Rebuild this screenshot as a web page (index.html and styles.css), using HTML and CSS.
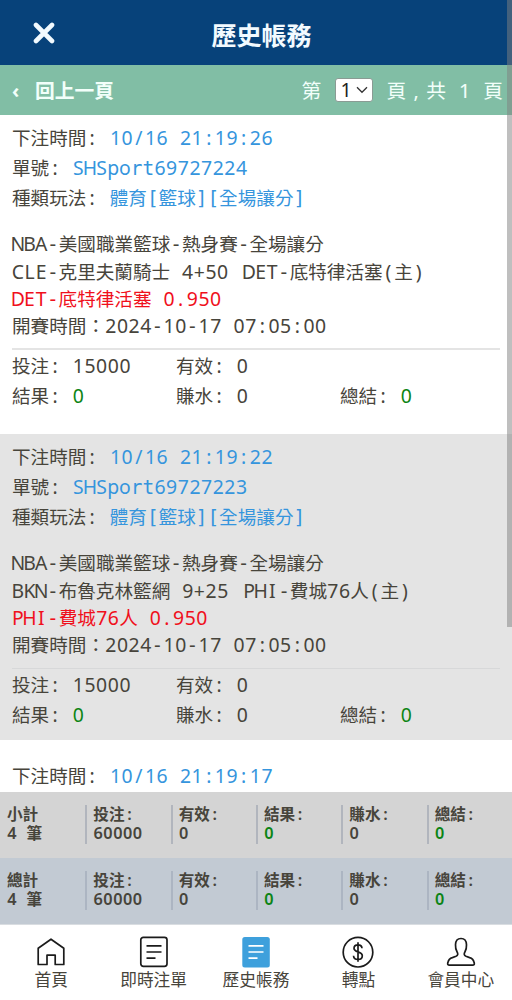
FILE: index.html
```html
<!DOCTYPE html>
<html lang="zh-Hant">
<head>
<meta charset="utf-8">
<title>歷史帳務</title>
<link rel="stylesheet" href="styles.css">
</head>
<body>
<div class="app">
  <header class="top">
    <svg class="close" width="22" height="22" viewBox="0 0 22 22"><path d="M3 3L19 19M19 3L3 19"/></svg>
    <h1>歷史帳務</h1>
  </header>
  <div class="bar">
    <span class="chev">‹</span><span class="back">回上一頁</span>
    <div class="pager"><span>第</span><span class="select">1<svg width="12" height="8" viewBox="0 0 12 8"><path d="M1 1.3L6 6.3L11 1.3"/></svg></span><span>頁</span><span class="comma">,</span><span data-mono>共 1 頁</span></div>
  </div>
  <main class="list">
    <article class="bet">
      <p data-mono>下注時間: <b>10/16 21:19:26</b></p>
      <p data-mono>單號: <b>SHSport69727224</b></p>
      <p data-mono>種類玩法: <b>體育[籃球][全場讓分]</b></p>
      <div class="detail">
        <p data-mono>NBA-美國職業籃球-熱身賽-全場讓分</p>
        <p data-mono>CLE-克里夫蘭騎士 4+50 <span class="side">DET-底特律活塞(主)</span></p>
        <p data-mono class="red">DET-底特律活塞 0.950</p>
        <p data-mono>開賽時間：2024-10-17 07:05:00</p>
      </div>
      <div class="sums">
        <p data-mono>投注: 15000</p><p data-mono>有效: 0</p><p></p>
        <p data-mono>結果: <em>0</em></p><p data-mono>賺水: 0</p><p data-mono>總結: <em>0</em></p>
      </div>
    </article>
    <article class="bet alt">
      <p data-mono>下注時間: <b>10/16 21:19:22</b></p>
      <p data-mono>單號: <b>SHSport69727223</b></p>
      <p data-mono>種類玩法: <b>體育[籃球][全場讓分]</b></p>
      <div class="detail">
        <p data-mono>NBA-美國職業籃球-熱身賽-全場讓分</p>
        <p data-mono>BKN-布魯克林籃網 9+25 <span class="side">PHI-費城76人(主)</span></p>
        <p data-mono class="red">PHI-費城76人 0.950</p>
        <p data-mono>開賽時間：2024-10-17 07:05:00</p>
      </div>
      <div class="sums">
        <p data-mono>投注: 15000</p><p data-mono>有效: 0</p><p></p>
        <p data-mono>結果: <em>0</em></p><p data-mono>賺水: 0</p><p data-mono>總結: <em>0</em></p>
      </div>
    </article>
    <article class="bet">
      <p data-mono>下注時間: <b>10/16 21:19:17</b></p>
    </article>
  </main>
  <section class="total">
    <div data-mono>小計<br>4 筆</div><div data-mono>投注:<br>60000</div><div data-mono>有效:<br>0</div><div data-mono>結果:<br><em>0</em></div><div data-mono>賺水:<br>0</div><div data-mono>總結:<br><em>0</em></div>
  </section>
  <section class="total grand">
    <div data-mono>總計<br>4 筆</div><div data-mono>投注:<br>60000</div><div data-mono>有效:<br>0</div><div data-mono>結果:<br><em>0</em></div><div data-mono>賺水:<br>0</div><div data-mono>總結:<br><em>0</em></div>
  </section>
  <nav class="tabs">
    <a><svg width="32" height="32" viewBox="0 0 32 32"><path d="M3.2 28.5V12.2L16 3.2L28.8 12.2V28.5H20.2V19.2H12V28.5Z"/></svg>首頁</a>
    <a><svg width="32" height="32" viewBox="0 0 32 32"><rect x="2.8" y="1.3" width="26.2" height="29" rx="2.5"/><path d="M8.5 9.8H23.5M8.5 16H23.5M8.5 22.2H17.5"/></svg>即時注單</a>
    <a><svg class="on" width="32" height="32" viewBox="0 0 32 32"><rect x="2.3" y="1" width="27.5" height="30.5" rx="2.5"/><path d="M8.5 9.8H23.5M8.5 16H23.5M8.5 22.2H17.5"/></svg>歷史帳務</a>
    <a><svg width="32" height="32" viewBox="0 0 32 32"><circle cx="16" cy="16.2" r="14.8"/><path d="M20 12.2C19.8 9.8 18 8.8 16 8.8C13.6 8.8 12 10 12 12.2C12 17 20.3 14.8 20.3 19.8C20.3 22 18.5 23.5 16 23.5C13.5 23.5 11.7 22.3 11.5 19.7M16 6.3V25.7"/></svg>轉點</a>
    <a><svg width="32" height="32" viewBox="0 0 32 32"><path d="M4.5 29.2C2.8 29.2 2.4 28.3 2.8 26.8C3.4 23.8 4.8 22.3 7.4 21.6L11 20.3C13.2 19.4 13.1 17.6 12 15.8C10.8 13.8 10.4 11.6 10.5 8.8C10.6 4.8 12.7 2.5 16 2.5S21.4 4.8 21.5 8.8C21.6 11.6 21.2 13.8 20 15.8C18.9 17.6 18.8 19.4 21 20.3L24.6 21.6C27.2 22.3 28.6 23.8 29.2 26.8C29.6 28.3 29.2 29.2 27.5 29.2Z"/></svg>會員中心</a>
  </nav>
  <div class="scrollbar"></div>
</div>
<script src="mono.js"></script>
</body>
</html>
```

FILE: styles.css
```css
* { box-sizing: border-box; margin: 0; padding: 0; }
body { font-family: "Noto Sans", "Noto Sans CJK TC", sans-serif; color: #47443b; background: #fff; }
.app { position: relative; width: 512px; height: 1000px; display: flex; flex-direction: column; overflow: hidden; }
svg { fill: none; flex: none; }

.top { height: 65px; flex: none; background: #07427a; color: #f2faff; display: grid; grid-template-columns: 88px 1fr 78px; align-items: center; }
.close { justify-self: center; stroke: #f2faff; stroke-width: 4.6; stroke-linecap: round; }
.top h1 { font-size: 25px; line-height: 40px; text-align: center; padding: 4px 0 0 1px; font-weight: 700; }

.bar { height: 50px; flex: none; background: #81bea5; color: #f2fffa; display: flex; align-items: center; padding: 2px 9px 0 12px; font-size: 19.8px; line-height: 30px; }
.chev { width: 23px; font-weight: 700; }
.back { font-weight: 700; }
.pager { margin-left: auto; display: flex; align-items: center; }
.select { width: 38px; height: 24px; margin: -2px 13px 0 14px; background: #fff; color: #222; border: 1px solid #8a9b94; border-radius: 3px; display: flex; align-items: center; justify-content: space-between; padding: 0 4px 0 4px; line-height: 22px; font-size: 19.5px; }
.select svg { stroke: #333; stroke-width: 1.3; }
.comma { width: 20px; text-align: center; }

.list { flex: 1; min-height: 0; overflow: hidden; }
.bet { height: 306px; margin-bottom: 13px; padding: 8px 12px 0; font-size: 18.6px; line-height: 30.1px; white-space: nowrap; }
.bet p { height: 30.1px; }
.bet b { font-weight: 400; color: #3595dd; }
.alt { background: #e4e4e4; }
.detail { line-height: 27.3px; padding: 17px 0 9px; border-bottom: 2px solid #e4e4e4; }
.detail p { height: 27.3px; }
.alt .detail { border-color: #d7d8d9; border-bottom-width: 1px; padding-bottom: 10px; }
.side { margin-left: 3px; }
.bet .red { color: #f0101c; }
em { font-style: normal; color: #0c8415; }
.sums { display: grid; grid-template-columns: 164px 164px 1fr; grid-auto-rows: 30px; padding-top: 1px; }

.ch { font-size: 1.043em; line-height: 1; }
.wide { font-family: "DejaVu Sans Mono", monospace; }

.total { height: 66px; flex: none; background: #d4d4d4; display: grid; grid-template-columns: repeat(6, 1fr); padding-top: 13px; font-size: 15.6px; line-height: 19.4px; font-weight: 600; white-space: nowrap; }
.total div { height: 39px; padding-left: 6px; border-left: 2px solid #b1b5bd; }
.total div:first-child { border-left: 0; padding-left: 7px; }
.grand { background: #c2cad3; }
.grand div { border-color: #acb5c2; }

.tabs { height: 76px; flex: none; display: grid; grid-template-columns: repeat(5, 1fr); padding-top: 11px; border-top: 1px solid #d9dde1; }
.tabs a { display: flex; flex-direction: column; align-items: center; font-size: 16.7px; line-height: 24px; }
.tabs svg { stroke: #1b1b1b; stroke-width: 1.7; stroke-linejoin: round; }
.tabs .on rect { fill: #3ea0dc; stroke: none; }
.tabs .on path { stroke: #fff; }

.scrollbar { position: absolute; top: 0; right: 0; width: 5px; height: 627px; background: rgba(127, 127, 127, .5); }
```

FILE: mono.js
```js
// Sets every ASCII character on an even grid, one cell per character.
const CELL = 0.601;
const WIDE = /[-rt[\]]/;
const ctx = document.createElement('canvas').getContext('2d');

function cellSpan(ch, weight) {
  const wide = WIDE.test(ch);
  ctx.font = weight + ' 100px ' + (wide ? '"DejaVu Sans Mono"' : '"Noto Sans"');
  const gap = (CELL - ctx.measureText(ch).width / 100) / 2;
  const span = document.createElement('span');
  span.className = wide ? 'ch wide' : 'ch';
  span.textContent = ch;
  span.style.margin = '0 ' + gap.toFixed(4) + 'em';
  return span;
}

document.querySelectorAll('[data-mono]').forEach(root => {
  const weight = getComputedStyle(root).fontWeight;
  const walker = document.createTreeWalker(root, NodeFilter.SHOW_TEXT);
  const nodes = [];
  while (walker.nextNode()) nodes.push(walker.currentNode);
  nodes.forEach(node => {
    const out = document.createDocumentFragment();
    for (const part of node.data.match(/[\x20-\x7e]|[^\x20-\x7e]+/g) || []) {
      out.append(/^[\x20-\x7e]$/.test(part) ? cellSpan(part, weight) : part);
    }
    node.replaceWith(out);
  });
});
```
